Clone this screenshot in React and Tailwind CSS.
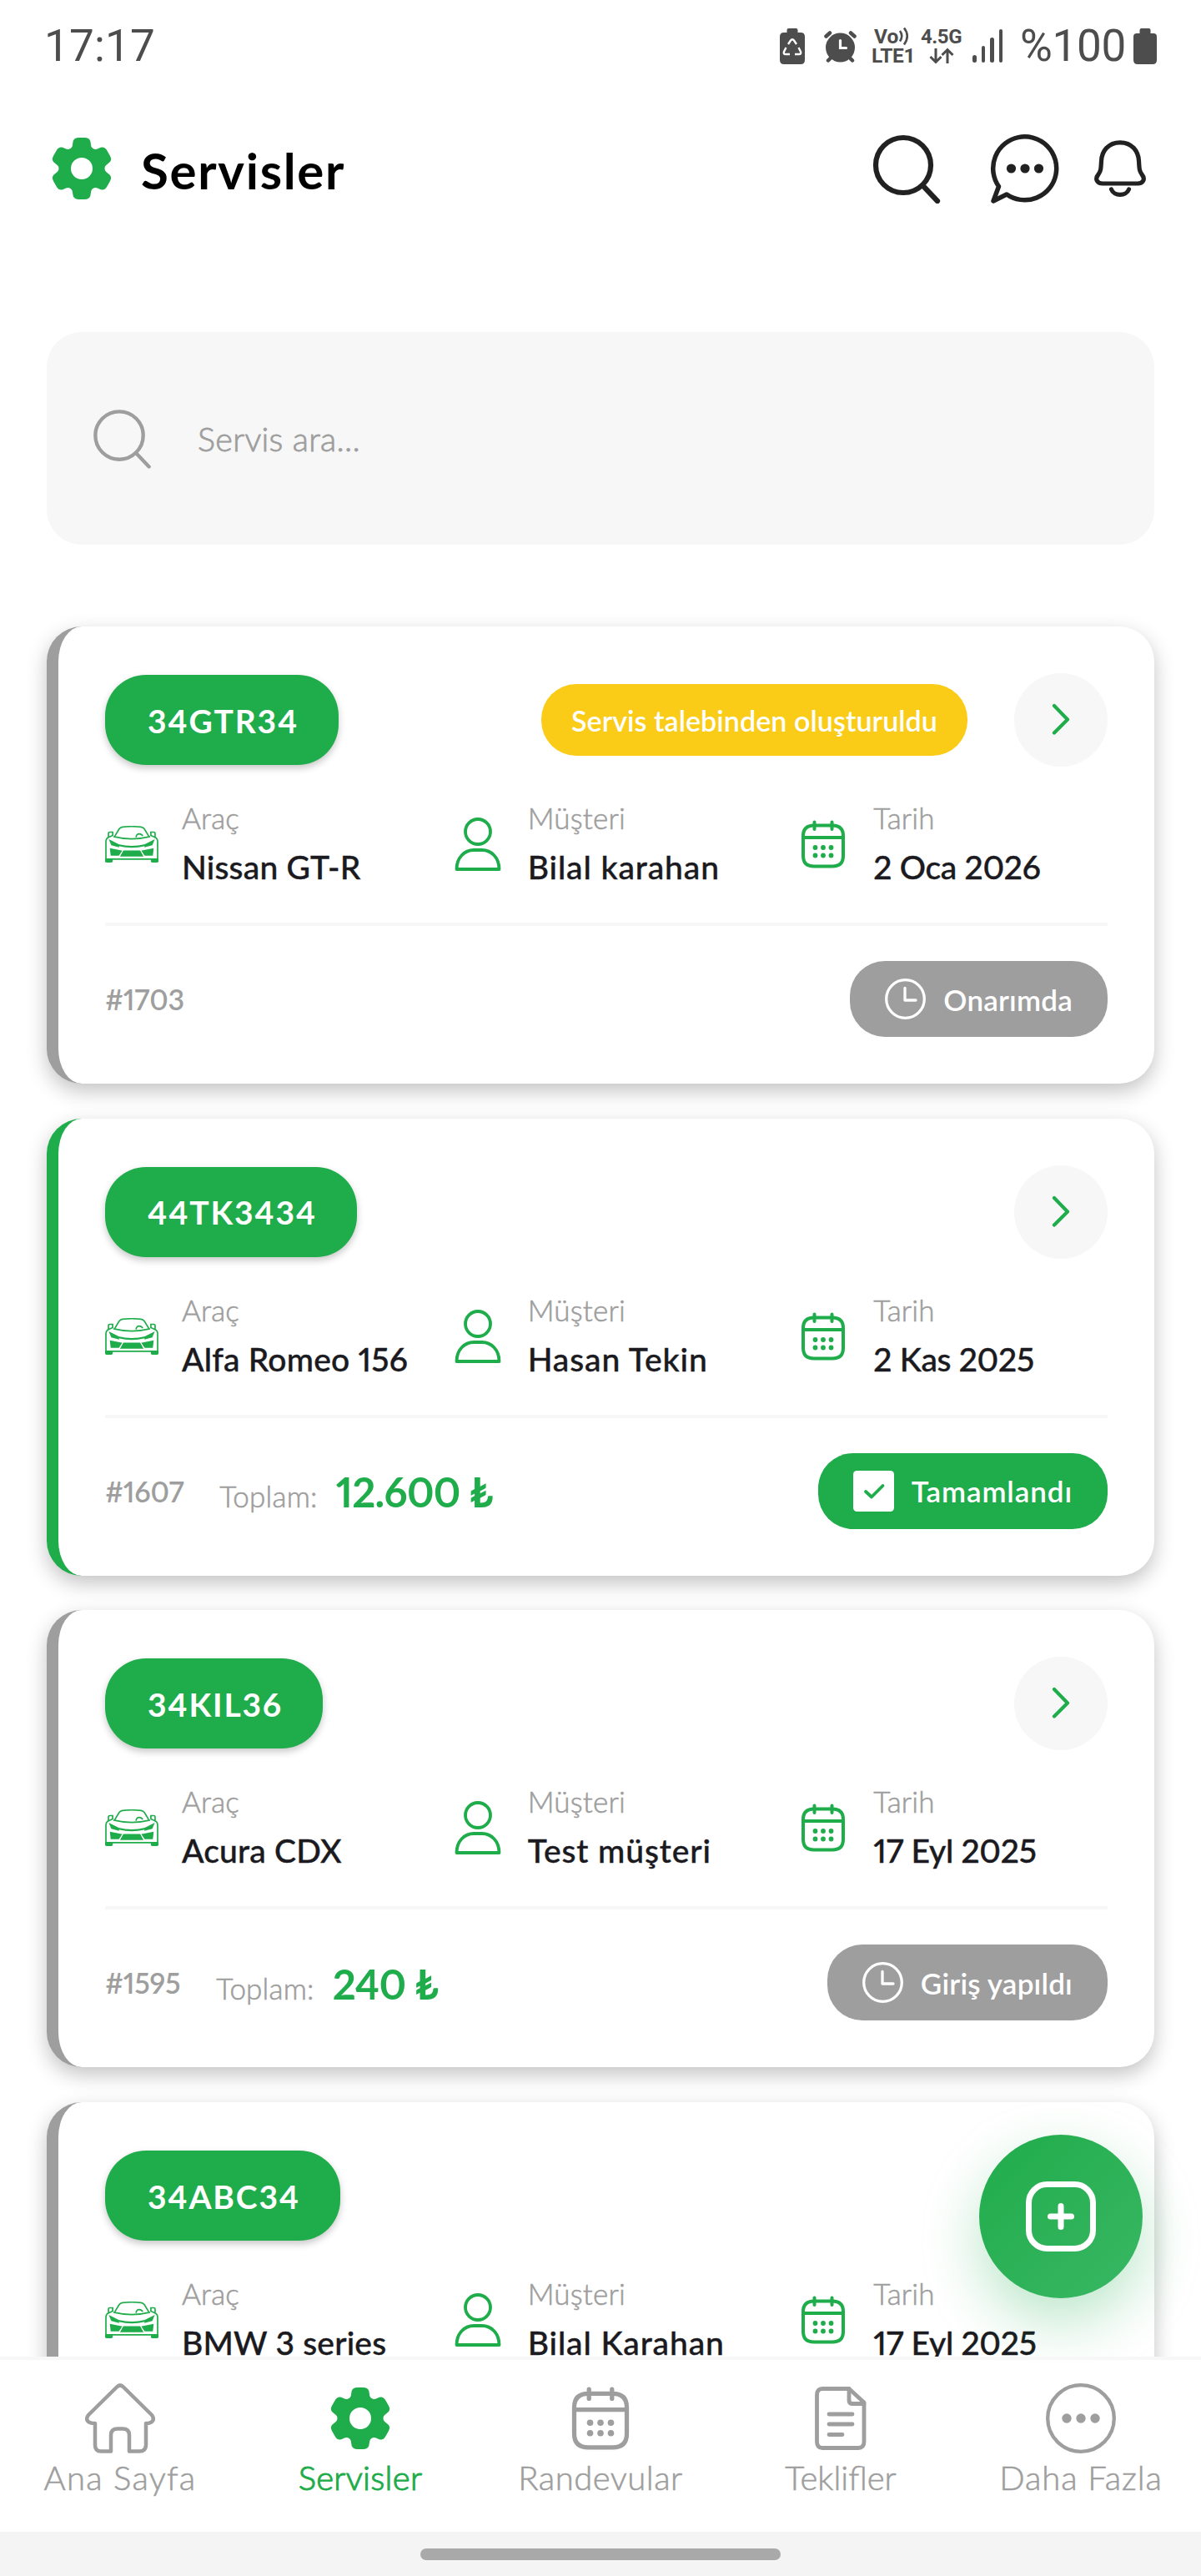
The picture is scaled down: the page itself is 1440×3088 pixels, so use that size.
import React from 'react';
import clsx from 'clsx';

const services = [
  { plate: '34GTR34', badge: 'Servis talebinden oluşturuldu', car: 'Nissan GT-R', customer: 'Bilal karahan', date: '2 Oca 2026', id: '#1703', status: 'Onarımda' },
  { plate: '44TK3434', car: 'Alfa Romeo 156', customer: 'Hasan Tekin', date: '2 Kas 2025', id: '#1607', total: '12.600 ₺', status: 'Tamamlandı', done: true },
  { plate: '34KIL36', car: 'Acura CDX', customer: 'Test müşteri', date: '17 Eyl 2025', id: '#1595', total: '240 ₺', status: 'Giriş yapıldı' },
  { plate: '34ABC34', car: 'BMW 3 series', customer: 'Bilal Karahan', date: '17 Eyl 2025', id: '#1594', status: 'Giriş yapıldı' },
];

/* Icons */

const GearIcon = ({ className }) => (
  <svg viewBox="-42 -42 84 84" className={className} fill="currentColor">
    <circle r="20.200" fill="none" stroke="currentColor" strokeWidth="14.400" />
    {[0, 60, 120, 180, 240, 300].map((angle) => (
      <path
        key={angle}
        transform={`rotate(${angle})`}
        d="M-17 -20 L-15.500 -22.500 Q-11 -24 -10.800 -30 Q-10.500 -37 -4 -37 H4 Q10.500 -37 10.800 -30 Q11 -24 15.500 -22.500 L17 -20 Z"
      />
    ))}
  </svg>
);

const SearchIcon = ({ className, strokeWidth }) => (
  <svg viewBox="0 0 84 84" className={className} fill="none" stroke="currentColor" strokeWidth={strokeWidth} strokeLinecap="round">
    <circle cx="38" cy="38" r="33" />
    <path d="M61 62 L79 81" />
  </svg>
);

const ChatIcon = () => (
  <svg viewBox="0 0 84 84" className="h-[84px] w-[84px]" fill="none" stroke="currentColor" strokeWidth="5.500" strokeLinejoin="round">
    <path d="M20 73 A38 38 0 1 0 10.500 63.500 L4 81 Z" />
    <g fill="currentColor" stroke="none">
      <circle cx="25.500" cy="42" r="5.600" />
      <circle cx="42" cy="42" r="5.600" />
      <circle cx="58.500" cy="42" r="5.600" />
    </g>
  </svg>
);

const BellIcon = () => (
  <svg viewBox="0 0 62 68" className="h-[68px] w-[62px]" fill="none" stroke="currentColor" strokeWidth="5.200" strokeLinecap="round">
    <path d="M31 2.800 C17 2.800 9 13 8.500 25 C8 34 8 37 5 41 C0 47 4 52 10 52 H52 C58 52 62 47 57 41 C54 37 54 34 53.500 25 C53 13 45 2.800 31 2.800 Z" />
    <path d="M20.500 59 C23.500 67.500 38.500 67.500 41.500 59" />
  </svg>
);

const CarIcon = () => (
  <svg viewBox="0 0 190 130" className="h-11 w-16 shrink-0" fill="none" stroke="currentColor" strokeWidth="5">
    <path d="M34 37 L50 11 Q54 5 62 4 Q95 0 128 4 Q136 5 140 11 L156 37" />
    <path d="M110 40 Q112 28 121 28 Q130 28 134 36" />
    <path d="M12 38 V26 Q12 22 17 22 H27 V34 L14 40 Q3 43 3 56 V118 H187 V56 Q187 43 176 40 L163 34 V22 H173 Q178 22 178 26 V38" />
    <path d="M30 38 Q95 54 160 38" />
    <g fill="currentColor" stroke="none">
      <path d="M13 47 L50 66 V76 L22 69 Z" />
      <path d="M177 47 L140 66 V76 L168 69 Z" />
      <path d="M48 65 Q95 77 142 65 V72 Q95 83 48 72 Z" />
      <path d="M17 79 L62 88 L49 106 H20 Z" />
      <path d="M173 79 L128 88 L141 106 H170 Z" />
      <path d="M64 87 H126 L137 109 H53 Z" />
      <path d="M0 116 H27 V126 Q27 130 22 130 H5 Q0 130 0 126 Z" />
      <path d="M190 116 H163 V126 Q163 130 168 130 H185 Q190 130 190 126 Z" />
    </g>
    <path d="M64 86 L50 110 M126 86 L140 110" stroke="white" strokeWidth="3" />
  </svg>
);

const PersonIcon = () => (
  <svg viewBox="0 0 64 64" className="h-16 w-16 shrink-0" fill="none" stroke="currentColor" strokeWidth="3.800" strokeLinejoin="round">
    <circle cx="32" cy="17" r="15" />
    <path d="M6.500 62 C6.500 48 16 39 27 39 H37 C48 39 57.500 48 57.500 62 Z" />
  </svg>
);

const CalendarIcon = ({ className }) => (
  <svg viewBox="0 0 64 64" className={className} fill="none" stroke="currentColor" strokeWidth="4" strokeLinecap="round">
    <path d="M21 9.500 H43 Q56 9.500 56 22 V46 Q56 58.500 43 58.500 H21 Q8 58.500 8 46 V22 Q8 9.500 21 9.500 Z" />
    <path d="M8 24 H56 M21.500 5.500 V14 M42.500 5.500 V14" />
    <g fill="currentColor" stroke="none">
      {[22.5, 32, 41.5].map((x) => (
        <React.Fragment key={x}>
          <circle cx={x} cy="36" r="2.900" />
          <circle cx={x} cy="45.500" r="2.900" />
        </React.Fragment>
      ))}
    </g>
  </svg>
);

const ClockIcon = () => (
  <svg viewBox="0 0 49 49" className="h-[49px] w-[49px]" fill="none" stroke="white" strokeWidth="3.300" strokeLinecap="round" strokeLinejoin="round">
    <circle cx="24.500" cy="24.500" r="22.800" />
    <path d="M24 11.500 V26 H37" />
  </svg>
);

const CheckIcon = () => (
  <svg viewBox="0 0 49 49" className="h-[49px] w-[49px]" fill="none">
    <rect width="49" height="49" rx="4.500" fill="white" />
    <path d="M15 25 L22 31.500 L35.500 18" stroke="#1fac4b" strokeWidth="3.800" strokeLinecap="round" strokeLinejoin="round" />
  </svg>
);

const HomeIcon = () => (
  <svg viewBox="0 0 84 84" className="h-[84px] w-[84px]" fill="none" stroke="currentColor" strokeWidth="4.500" strokeLinejoin="round">
    <path d="M38 4.500 Q42 0.500 46 4.500 L80 38 Q83 42 81 45 Q79 48 73 48 V74 Q73 81.500 65 81.500 H53 V62 Q53 54.500 45 54.500 H39 Q31 54.500 31 62 V81.500 H19 Q12 81.500 12 74 V48 Q5 48 3 45 Q1 42 4 38 Z" />
  </svg>
);

const DocumentIcon = () => (
  <svg viewBox="0 0 84 84" className="h-[84px] w-[84px]" fill="none" stroke="currentColor" strokeWidth="4.800" strokeLinecap="round" strokeLinejoin="round">
    <path d="M20 6.500 H52 L70 23 V70 Q70 77.500 63 77.500 H20 Q13.500 77.500 13.500 70 V14 Q13.500 6.500 20 6.500 Z" />
    <path d="M52 6.500 V20 Q52 24.500 56 24.500 H70 M28 37 H56 M28 49 H56 M28 61.500 H44" />
  </svg>
);

const MoreIcon = () => (
  <svg viewBox="0 0 84 84" className="h-[84px] w-[84px]" fill="currentColor">
    <circle cx="42" cy="42" r="39.800" fill="none" stroke="currentColor" strokeWidth="4.300" />
    <circle cx="25" cy="42" r="5.700" />
    <circle cx="42" cy="42" r="5.700" />
    <circle cx="59" cy="42" r="5.700" />
  </svg>
);

/* Android status bar */

const StatusBar = () => (
  <div className="flex h-[110px] shrink-0 items-center justify-between pl-[53px] pr-[53px] font-['Roboto',sans-serif] normal-nums text-[#4d4d4d]">
    <span className="text-[53px] leading-none tracking-[0.2px]">17:17</span>
    <div className="flex items-center">
      <svg viewBox="0 0 30 43" className="h-[43px] w-[30px]" fill="currentColor">
        <path d="M8.500 5 V2 Q8.500 0 10.500 0 H19.500 Q21.500 0 21.500 2 V5 H25 Q30 5 30 10 V38 Q30 43 25 43 H5 Q0 43 0 38 V10 Q0 5 5 5 Z" />
        <path d="M10 19 L13 14.500 Q15 12 17 14.500 L20 19 M22.500 23 L25 28 Q26 31 23 31 H18 M12 31 H7 Q4 31 5 28 L7.500 23" fill="none" stroke="white" strokeWidth="2.400" />
      </svg>
      <svg viewBox="0 0 39 39" className="ml-[23px] h-[39px] w-[39px]" fill="currentColor">
        <circle cx="19.500" cy="21" r="17.500" />
        <path d="M2.500 7.500 L7 3.500 M36.500 7.500 L32 3.500 M5 36.500 L9 32.500 M34 36.500 L30 32.500" stroke="currentColor" strokeWidth="4.500" strokeLinecap="round" />
        <path d="M19.500 12.500 V21.500 H26.500" fill="none" stroke="white" strokeWidth="3.200" strokeLinecap="round" />
      </svg>
      <div className="ml-[18px] flex w-[52px] flex-col text-[24.500px] font-bold leading-[23px]">
        <span className="flex items-center pl-[3px]">
          Vo
          <svg viewBox="0 0 14 23" className="h-[23px] w-[14px]" fill="none" stroke="currentColor" strokeWidth="2.600">
            <path d="M2 5 Q6.500 11 2 17.500 M7 1.500 Q14.500 11 7 21.500" />
          </svg>
        </span>
        <span className="-tracking-[0.3px]">LTE1</span>
      </div>
      <div className="ml-[9px] flex w-[45px] flex-col items-center">
        <span className="text-[24px] font-bold leading-[23px] -tracking-[0.4px]">4.5G</span>
        <svg viewBox="0 0 30 20" className="mt-px h-5 w-[30px]" fill="none" stroke="currentColor" strokeWidth="3">
          <path d="M8 1 V17 M1.500 11 L8 17.500 L14.500 11 M22 19 V3 M15.500 9 L22 2.500 L28.500 9" />
        </svg>
      </div>
      <div className="ml-[15px] flex h-10 w-9 items-end justify-between">
        <span className="h-[9px] w-[4.500px] rounded-full bg-[#4d4d4d]" />
        <span className="h-[20px] w-[4.500px] rounded-full bg-[#4d4d4d]" />
        <span className="h-[30px] w-[4.500px] rounded-full bg-[#4d4d4d]" />
        <span className="h-[40px] w-[4.500px] rounded-full bg-[#4d4d4d]" />
      </div>
      <span className="ml-[21px] w-[130px] whitespace-nowrap text-[53px] leading-none -tracking-[0.3px]">%100</span>
      <svg viewBox="0 0 28 43" className="ml-[6px] h-[43px] w-[28px]" fill="currentColor">
        <path d="M7.500 6 V2 Q7.500 0 9.500 0 H18.500 Q20.500 0 20.500 2 V6 H24 Q28 6 28 10 V38 Q28 43 23 43 H5 Q0 43 0 38 V10 Q0 6 4 6 Z" />
      </svg>
    </div>
  </div>
);

const Header = () => (
  <header className="flex h-[184px] shrink-0 items-center pl-14 pr-[66px]">
    <GearIcon className="h-[84px] w-[84px] text-[#1fac4b]" />
    <h1 className="ml-[29px] flex-1 pt-1 text-[60px] font-bold leading-none tracking-[1.700px] text-black">Servisler</h1>
    <div className="flex items-center text-[#212121]">
      <SearchIcon className="h-[84px] w-[84px]" strokeWidth="6.200" />
      <div className="ml-[58px]"><ChatIcon /></div>
      <div className="ml-[41px]"><BellIcon /></div>
    </div>
  </header>
);

/* Service card */

const InfoItem = ({ icon, label, value, valueClass }) => (
  <div className="flex items-center gap-7 text-[#1fac4b]">
    {icon}
    <div className="whitespace-nowrap">
      <p className="text-[35px] font-light leading-[50px] tracking-[0.200px] text-[#9e9e9e] [-webkit-text-stroke:0.600px]">{label}</p>
      <p className={clsx('pt-1 text-[39px] font-medium leading-[60px] text-[#1a1a20] [-webkit-text-stroke:0.400px]', valueClass)}>{value}</p>
    </div>
  </div>
);

const ServiceCard = ({ service }) => (
  <article
    className={clsx(
      'h-[548px] shrink-0 rounded-[42px] border-l-[14px] bg-white px-14 pt-14 shadow-[0_9px_24px_rgba(0,0,0,0.24)]',
      service.done ? 'border-[#1fac4b]' : 'border-[#9e9e9e]'
    )}
  >
    <div className="flex h-28 items-center">
      <span className="flex h-[108px] items-center rounded-[49px] bg-[#1fac4b] pl-[51px] pr-12 pt-0.5 text-[39px] font-bold tracking-[1.800px] text-white shadow-[0_4px_8px_rgba(0,0,0,0.22)]">
        {service.plate}
      </span>
      {service.badge && (
        <span className="ml-auto flex h-[86px] items-center rounded-[42px] bg-[#facc18] px-9 text-[34px] font-semibold text-white tracking-[0.070px]">
          {service.badge}
        </span>
      )}
      <span className={clsx('flex h-28 w-28 items-center justify-center rounded-full bg-[#f7f7f7]', service.badge ? 'ml-14' : 'ml-auto')}>
        <svg viewBox="0 0 24 40" className="h-10 w-6" fill="none" stroke="#1fac4b" strokeWidth="4.200" strokeLinecap="round" strokeLinejoin="round">
          <path d="M4 3 L20 19.500 L4 35.500" />
        </svg>
      </span>
    </div>

    <div className="mt-9 grid h-[114px] grid-cols-3 gap-[42px]">
      <InfoItem icon={<CarIcon />} label="Araç" value={service.car} valueClass="tracking-[0.200px]" />
      <InfoItem icon={<PersonIcon />} label="Müşteri" value={service.customer} valueClass="tracking-[0.900px]" />
      <InfoItem icon={<CalendarIcon className="h-16 w-16 shrink-0" />} label="Tarih" value={service.date} valueClass="-tracking-[0.300px]" />
    </div>

    <div className="mt-[37px] h-1 bg-[#f7f7f7]" />

    <div className="mt-[42px] flex h-[91px] items-center">
      <span className="text-[34px] font-semibold -tracking-[0.300px] text-[#9e9e9e]">{service.id}</span>
      {service.total && (
        <div className="ml-[43px] flex items-baseline gap-[22px] pt-1">
          <span className="text-[35px] font-light tracking-[0.200px] text-[#9e9e9e] [-webkit-text-stroke:0.600px]">Toplam:</span>
          <span className="text-[49px] font-bold -tracking-[0.700px] text-[#1fac4b]">{service.total}</span>
        </div>
      )}
      <span
        className={clsx(
          'ml-auto flex h-[91px] items-center gap-[21px] rounded-[42px] px-[42px] text-[35px] font-semibold text-white',
          service.done ? 'bg-[#1fac4b] tracking-[0.900px]' : 'bg-[#9e9e9e] tracking-[0.200px]'
        )}
      >
        {service.done ? <CheckIcon /> : <ClockIcon />}
        <span className="pt-px">{service.status}</span>
      </span>
    </div>
  </article>
);

const navItems = [
  { label: 'Ana Sayfa', icon: <HomeIcon />, tracking: 'tracking-[1.300px]' },
  { label: 'Servisler', icon: <GearIcon className="h-[84px] w-[84px]" />, tracking: 'tracking-[0.300px]', active: true },
  { label: 'Randevular', icon: <CalendarIcon className="h-[84px] w-[84px]" />, tracking: 'tracking-[0.500px]' },
  { label: 'Teklifler', icon: <DocumentIcon />, tracking: 'tracking-normal' },
  { label: 'Daha Fazla', icon: <MoreIcon />, tracking: 'tracking-[0.900px]' },
];

const BottomNav = () => (
  <nav className="grid h-[210px] shrink-0 grid-cols-5 border-t-4 border-[#f7f7f7] bg-white pt-7">
    {navItems.map((item) => (
      <div key={item.label} className={clsx('flex flex-col items-center', item.active ? 'text-[#1fac4b]' : 'text-[#9e9e9e]')}>
        {item.icon}
        <span
          className={clsx(
            'mt-1 whitespace-nowrap text-[40px] font-light leading-[50px]',
            item.tracking,
            item.active ? '[-webkit-text-stroke:1.100px]' : '[-webkit-text-stroke:0.600px]'
          )}
        >
          {item.label}
        </span>
      </div>
    ))}
  </nav>
);

export default function App() {
  return (
    <div className="flex h-[3088px] w-[1440px] flex-col overflow-hidden bg-white font-['Lato','Noto_Sans',sans-serif] proportional-nums">
      <StatusBar />
      <Header />

      <main className="relative flex-1 overflow-hidden px-14 pt-[104px]">
        <div className="flex h-[255px] items-center rounded-[42px] bg-[#f7f7f7] pl-[54px]">
          <SearchIcon className="h-[73px] w-[73px] text-[#9e9e9e]" strokeWidth="5" />
          <span className="ml-[54px] text-[39.500px] font-light tracking-[0.300px] text-[#9e9e9e] [-webkit-text-stroke:0.800px]">Servis ara...</span>
        </div>

        <div className="mt-[98px] flex flex-col gap-[41.600px]">
          {services.map((service) => (
            <ServiceCard key={service.plate} service={service} />
          ))}
        </div>

        {/* Add service */}
        <button className="absolute bottom-[70px] right-[70px] flex h-[196px] w-[196px] items-center justify-center rounded-full bg-linear-to-br from-[#1fac4b] to-[#38b763] shadow-[0_28px_70px_rgba(31,172,75,0.3)]">
          <svg viewBox="0 0 84 84" className="h-[84px] w-[84px]" fill="none" stroke="white" strokeWidth="7" strokeLinecap="round">
            <rect x="3.500" y="3.500" width="77" height="77" rx="22" />
            <path d="M42 29.500 V54.500 M29.500 42 H54.500" />
          </svg>
        </button>
      </main>

      <BottomNav />
      <div className="flex h-[53px] shrink-0 justify-center bg-[#f4f4f4] pt-5">
        <div className="h-3.5 w-[432px] rounded-full bg-[#a9a9a9]" />
      </div>
    </div>
  );
}
